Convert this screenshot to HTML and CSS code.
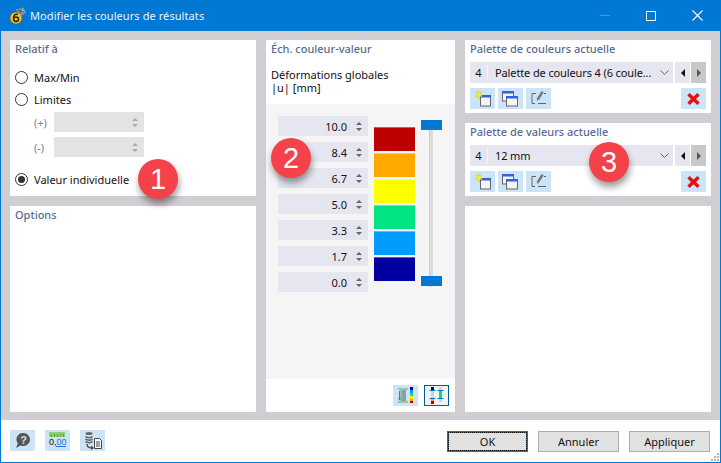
FILE: index.html
```html
<!DOCTYPE html>
<html lang="fr">
<head>
<meta charset="utf-8">
<title>Modifier les couleurs de résultats</title>
<link rel="stylesheet" href="styles.css">
</head>
<body>
<div class="window">
  <header class="titlebar">
    <svg class="app-icon" width="18" height="18" viewBox="0 0 18 18">
      <path d="M7 2.500l7-2 3 5-6 4.500z" fill="#8fa3c6"/>
      <path d="M8 3.500l7.500 1.500M9 1.500l5 6M12.500 1l-3 7.500" stroke="#3d5688" stroke-width=".8" fill="none"/>
      <circle cx="7" cy="11" r="6" fill="#f2c230" stroke="#6d5810" stroke-width=".6"/>
      <path d="M9 7.500c-3-1-4.500 1-4.500 3.500s1 3.500 2.500 3.500 2.500-1 2.500-2.500S8.500 10 7 10s-2 .7-2.500 1.500" fill="none" stroke="#22220f" stroke-width="1.500"/>
    </svg>
    <span class="title">Modifier les couleurs de résultats</span>
    <div class="winbtns">
      <span class="wb wb-min"></span>
      <span class="wb"><span class="wb-max"></span></span>
      <span class="wb">
        <svg width="11" height="11" viewBox="0 0 11 11"><path d="M.5.500l10 10M10.500.500l-10 10" stroke="#fff" stroke-width="1.100"/></svg>
      </span>
    </div>
  </header>

  <main class="content">
    <div class="col">
      <section class="panel panel-relative">
        <h2 class="ptitle">Relatif à</h2>
        <div class="radios">
          <div class="radio-row"><span class="radio"></span>Max/Min</div>
          <div class="radio-row"><span class="radio"></span>Limites</div>
          <div class="limit-row"><span class="limit-label">(+)</span><div class="spin spin-off"><span class="arrows"><i class="up"></i><i class="down"></i></span></div></div>
          <div class="limit-row"><span class="limit-label">(-)</span><div class="spin spin-off"><span class="arrows"><i class="up"></i><i class="down"></i></span></div></div>
          <div class="radio-row radio-last"><span class="radio radio-on"></span>Valeur individuelle</div>
        </div>
      </section>
      <section class="panel grow">
        <h2 class="ptitle">Options</h2>
      </section>
    </div>

    <section class="panel scale">
      <div class="scale-head">
        <h2 class="ptitle">Éch. couleur-valeur</h2>
        <p class="scale-desc">Déformations globales<br>|u| [mm]</p>
      </div>
      <div class="scale-body">
        <div class="spins">
          <div class="spin"><span class="val">10.0</span><span class="arrows"><i class="up"></i><i class="down"></i></span></div>
          <div class="spin"><span class="val">8.4</span><span class="arrows"><i class="up"></i><i class="down"></i></span></div>
          <div class="spin"><span class="val">6.7</span><span class="arrows"><i class="up"></i><i class="down"></i></span></div>
          <div class="spin"><span class="val">5.0</span><span class="arrows"><i class="up"></i><i class="down"></i></span></div>
          <div class="spin"><span class="val">3.3</span><span class="arrows"><i class="up"></i><i class="down"></i></span></div>
          <div class="spin"><span class="val">1.7</span><span class="arrows"><i class="up"></i><i class="down"></i></span></div>
          <div class="spin"><span class="val">0.0</span><span class="arrows"><i class="up"></i><i class="down"></i></span></div>
        </div>
        <div class="bars">
          <span class="bar c1"></span><span class="bar c2"></span><span class="bar c3"></span>
          <span class="bar c4"></span><span class="bar c5"></span><span class="bar c6"></span>
        </div>
        <div class="slider">
          <span class="track"></span>
          <span class="thumb thumb-top"></span>
          <span class="thumb thumb-bottom"></span>
        </div>
      </div>
      <div class="scale-foot">
        <button class="ib">
          <svg width="19" height="19" viewBox="0 0 19 19">
            <path d="M2 2h10v2h-2v11h2v2H2v-2h2V4H2z" fill="#8fc9a8"/><rect x="5.500" y="4" width="4.500" height="11" fill="#8d9cb0"/>
            <path d="M3.500 5v9" stroke="#2f9a58"/><path d="M2 12h3l-1.500 2.500z" fill="#2f9a58"/>
            <rect x="14" y="1" width="3" height="3" fill="#0000a0"/><rect x="14" y="4" width="3" height="3" fill="#00a0ff"/><rect x="14" y="7" width="3" height="3" fill="#00e080"/><rect x="14" y="10" width="3" height="3" fill="#f5f500"/><rect x="14" y="13" width="3" height="2" fill="#ffa000"/><rect x="14" y="15" width="3" height="2" fill="#c00000"/>
          </svg>
        </button>
        <button class="ib ib-active">
          <svg width="19" height="19" viewBox="0 0 19 19">
            <rect x="4" y="1" width="3" height="17" fill="#d2d2d2"/><rect x="12" y="1" width="3" height="15" fill="#d2d2d2"/>
            <rect x="4" y="1" width="3" height="3" fill="#000090"/><rect x="4" y="13" width="3" height="2" fill="#ffa000"/><rect x="4" y="15" width="3" height="3" fill="#c00000"/>
            <rect x="12" y="5" width="3" height="8" fill="#10e060"/>
            <path d="M2.500 4.500h6M2.500 12.500h6M10.500 4.500h6M10.500 12.500h6" stroke="#0078c8"/>
          </svg>
        </button>
      </div>
    </section>

    <div class="col">
      <section class="panel palette">
        <h2 class="ptitle">Palette de couleurs actuelle</h2>
        <div class="combo-row">
          <div class="combo"><span class="num">4</span><span class="cname">Palette de couleurs 4 (6 coule...</span>
            <svg class="chev" width="9" height="5" viewBox="0 0 9 5"><path d="M.5.500l4 4 4-4" fill="none" stroke="#666"/></svg></div>
          <span class="nav"><i class="tri-l"></i></span><span class="nav nav-off"><i class="tri-r"></i></span>
        </div>
        <div class="tools">
          <button class="ib"><svg width="19" height="19" viewBox="0 0 19 19"><use href="#i-new"/></svg></button>
          <button class="ib"><svg width="19" height="19" viewBox="0 0 19 19"><use href="#i-copy"/></svg></button>
          <button class="ib"><svg width="19" height="19" viewBox="0 0 19 19"><use href="#i-edit"/></svg></button>
          <button class="ib ib-del"><svg width="13" height="12" viewBox="0 0 13 12"><use href="#i-x"/></svg></button>
        </div>
      </section>
      <section class="panel palette">
        <h2 class="ptitle">Palette de valeurs actuelle</h2>
        <div class="combo-row">
          <div class="combo"><span class="num">4</span><span class="cname">12 mm</span>
            <svg class="chev" width="9" height="5" viewBox="0 0 9 5"><path d="M.5.500l4 4 4-4" fill="none" stroke="#666"/></svg></div>
          <span class="nav"><i class="tri-l"></i></span><span class="nav nav-off"><i class="tri-r"></i></span>
        </div>
        <div class="tools">
          <button class="ib"><svg width="19" height="19" viewBox="0 0 19 19"><use href="#i-new"/></svg></button>
          <button class="ib"><svg width="19" height="19" viewBox="0 0 19 19"><use href="#i-copy"/></svg></button>
          <button class="ib"><svg width="19" height="19" viewBox="0 0 19 19"><use href="#i-edit"/></svg></button>
          <button class="ib ib-del"><svg width="13" height="12" viewBox="0 0 13 12"><use href="#i-x"/></svg></button>
        </div>
      </section>
      <section class="panel grow"></section>
    </div>
  </main>

  <footer class="footer">
    <div class="foot-tools">
      <button class="ib">
        <svg width="19" height="19" viewBox="0 0 19 19">
          <path d="M10.500 2a6.500 6.500 0 0 1 0 13c-1 0-2-.2-2.800-.6L3 17l1.800-4.600A6.500 6.500 0 0 1 10.500 2z" fill="#555"/>
          <text x="10.500" y="12.500" class="qmark">?</text>
        </svg>
      </button>
      <button class="ib">
        <svg width="19" height="19" viewBox="0 0 19 19">
          <rect x="1" y="1" width="16" height="5" fill="#8ccf6e"/>
          <path d="M3.500 3v3M6.500 3v3M9.500 3v3M12.500 3v3M15.500 3v3" stroke="#5f9c48"/>
          <text x="1" y="14" class="ruler-t">0,</text><text x="8.500" y="14" class="ruler-b">00</text>
          <path d="M8 15.500h10" stroke="#2a6fe0"/>
        </svg>
      </button>
      <button class="ib">
        <svg width="21" height="19" viewBox="0 0 21 19">
          <ellipse cx="7" cy="2.500" rx="3.500" ry="1.500" fill="#666"/><path d="M3.500 5.500c1 1.500 6 1.500 7 0M3.500 8c1 1.500 6 1.500 7 0M3.500 10.500c1 1.500 6 1.500 7 0" stroke="#666" stroke-width="1.500" fill="none"/>
          <path d="M5 13c0 3 2 4 5 4" stroke="#444" stroke-width="1.300" fill="none"/><path d="M9 14.500l3 2.500-3 2z" fill="#444"/>
          <path d="M12.500 7.500h5l2 2v8h-7z" fill="#fff" stroke="#444"/><path d="M14 11h4M14 13h4M14 15h4" stroke="#444"/>
        </svg>
      </button>
    </div>
    <div class="foot-actions">
      <button class="btn btn-default">OK</button>
      <button class="btn">Annuler</button>
      <button class="btn">Appliquer</button>
    </div>
    <svg class="grip" width="9" height="9" viewBox="0 0 9 9">
      <path d="M6 0h2v2H6zM3 3h2v2H3zM6 3h2v2H6zM0 6h2v2H0zM3 6h2v2H3zM6 6h2v2H6z" fill="#b5b5b5"/>
    </svg>
  </footer>

  <span class="badge badge-1">1</span>
  <span class="badge badge-2">2</span>
  <span class="badge badge-3">3</span>
</div>

<svg class="defs" width="0" height="0">
  <defs>
    <g id="i-new">
      <rect x="7.500" y="6.500" width="10" height="10.500" fill="#f4f4f4" stroke="#666"/>
      <rect x="7" y="6" width="11" height="2.500" fill="#3860d8"/>
      <path d="M5 1l1 2.800 2.800-1-1.400 2.700 2 1.700-2.800.3-.6 3-1-3-3 .2 2-2.200-1.400-2.700 2.800 1z" fill="#f5f020" stroke="#c8c040" stroke-width=".4"/>
    </g>
    <g id="i-copy">
      <rect x="1.500" y="2.500" width="11" height="9.500" fill="#f4f4f4" stroke="#666"/>
      <rect x="1" y="2" width="12" height="2.500" fill="#3860d8"/>
      <rect x="5.500" y="7.500" width="11" height="9.500" fill="#f4f4f4" stroke="#666"/>
      <rect x="5" y="7" width="12" height="2.500" fill="#3860d8"/>
    </g>
    <g id="i-edit">
      <path d="M7 4.500H3v10h3M9 14.500h8M15 4.500h2" fill="none" stroke="#666"/>
      <path d="M12.500 2l2.200 1.300-4.500 7.200-2.300 1.300.2-2.600z" fill="#777"/>
    </g>
    <g id="i-x">
      <path d="M1.500 1.200l10 9.600M11.500 1.200l-10 9.600" stroke="#e81010" stroke-width="3.400" fill="none"/>
    </g>
  </defs>
</svg>
</body>
</html>
```

FILE: styles.css
```css
* { box-sizing: border-box; }
html, body { margin: 0; padding: 0; }
body {
  width: 721px;
  height: 463px;
  overflow: hidden;
  font-family: "Noto Sans", "Liberation Sans", sans-serif;
  font-size: 11px;
  color: #111;
}
.window {
  position: relative;
  width: 721px;
  height: 463px;
  display: flex;
  flex-direction: column;
  border: 1px solid #0078d4;
  border-top: 0;
  background: #fff;
}
.titlebar {
  height: 31px;
  flex: none;
  background: #0078d4;
  color: #fff;
  display: flex;
  align-items: center;
  padding-left: 8px;
}
.app-icon { flex: none; }
.title { margin-left: 3px; font-size: 11px; letter-spacing: .08px; color: #eaf4fc; }
.winbtns { margin-left: auto; display: flex; }
.wb { width: 46px; height: 31px; display: flex; align-items: center; justify-content: center; }
.wb-min::before { content: ""; width: 10px; height: 1px; background: #3f9ae0; }
.wb-max { width: 10px; height: 10px; border: 1px solid #fff; }

.content {
  flex: 1;
  min-height: 0;
  background: #d0ced3;
  padding: 9px 9px 8px 9px;
  display: grid;
  grid-template-columns: 246px 189px 246px;
  column-gap: 10px;
}
.col { display: flex; flex-direction: column; gap: 10px; min-height: 0; }
.panel { background: #fff; }
.grow { flex: 1; }
.ptitle {
  margin: 0;
  font-size: 11px;
  line-height: 16px;
  font-weight: 500;
  color: #5a6c92;
  padding: 1px 0 0 5px;
}

.panel-relative { height: 156px; }
.radios { margin-top: 9px; padding-left: 5px; }
.radio-row { display: flex; align-items: center; height: 22px; gap: 6px; }
.radio-last { margin-top: 11px; }
.radio { width: 13px; height: 13px; border: 1px solid #333; border-radius: 50%; background: #fff; display: flex; align-items: center; justify-content: center; }
.radio-on::after { content: ""; width: 7px; height: 7px; border-radius: 50%; background: #333; }
.limit-row { display: flex; align-items: center; height: 20px; margin-bottom: 5px; }
.limit-row:nth-child(3) { margin-top: 2px; }
.limit-label { width: 39px; padding-left: 19px; color: #75839f; }
.spin { width: 90px; height: 20px; background: #e6e6f0; display: flex; align-items: center; justify-content: flex-end; }
.spin-off { background: #e3e3e3; }
.val { margin-right: 2px; }
.arrows { width: 19px; display: flex; flex-direction: column; align-items: center; gap: 3px; }
.up, .down { display: block; width: 0; height: 0; border-left: 3px solid transparent; border-right: 3px solid transparent; }
.up { border-bottom: 3px solid #666; }
.down { border-top: 3px solid #666; }
.spin-off .up { border-bottom-color: #aaa; }
.spin-off .down { border-top-color: #aaa; }

.scale { display: flex; flex-direction: column; }
.scale-head { height: 64px; flex: none; }
.scale-desc { margin: 11px 0 0; padding-left: 5px; line-height: 13px; }
.scale-body {
  flex: none;
  height: 275px;
  background: #f5f5f5;
  display: flex;
  padding: 12px 0 0 12px;
}
.spins { display: flex; flex-direction: column; gap: 6px; }
.bars { margin: 11px 0 0 6px; display: flex; flex-direction: column; gap: 2px; }
.bar { display: block; width: 41px; height: 24px; border-top: 1px solid rgba(255, 255, 255, .35); }
.c1 { background: #bd0000; }
.c2 { background: #ffa800; }
.c3 { background: #ffff00; }
.c4 { background: #00e484; }
.c5 { background: #009cff; }
.c6 { background: #0000a0; }
.slider { position: relative; width: 21px; height: 167px; margin: 4px 0 0 6px; display: flex; }
.track { width: 4px; height: 157px; margin: 10px 0 0 8px; background: #dcdcdc; border-left: 1px solid #cfcfcf; }
.thumb { position: absolute; left: 0; width: 21px; height: 10px; background: #0078d4; }
.thumb-top { top: 0; }
.thumb-bottom { top: 156px; }
.scale-foot { flex: 1; display: flex; justify-content: flex-end; align-items: center; gap: 6px; padding: 6px 6px 6px 0; }

.ib {
  flex: none;
  width: 25px;
  height: 21px;
  border: 0;
  padding: 0;
  background: #cce4f7;
  display: flex;
  align-items: center;
  justify-content: center;
}
.ib-active { background: #f0f4f8; border: 1px solid #005a9e; }
.palette { height: 73px; padding: 0 5px; }
.palette .ptitle { padding-left: 0; }
.combo-row { display: flex; margin-top: 5px; height: 21px; }
.combo { width: 203px; background: #e6e6f0; display: flex; align-items: center; position: relative; }
.num { width: 18px; text-align: center; border-right: 1px solid #f6f6fa; line-height: 15px; }
.cname { margin-left: 7px; letter-spacing: -.12px; }
.chev { position: absolute; right: 4px; top: 8px; }
.nav { width: 15px; margin-left: 1px; background: #e6e6f0; display: flex; align-items: center; justify-content: center; }
.nav:first-of-type { margin-left: 2px; }
.nav-off { background: #c8c8c8; width: 15px; margin-left: 1px; }
.tri-l { width: 0; height: 0; border-top: 4px solid transparent; border-bottom: 4px solid transparent; border-right: 4px solid #111; }
.tri-r { width: 0; height: 0; border-top: 4px solid transparent; border-bottom: 4px solid transparent; border-left: 4px solid #555; }
.tools { display: flex; gap: 3px; margin-top: 5px; }
.ib-del { margin-left: auto; }

.footer {
  position: relative;
  flex: none;
  height: 42px;
  display: flex;
  align-items: flex-start;
  padding: 10px 10px 0 9px;
}
.foot-tools { display: flex; gap: 10px; }
.foot-actions { margin-left: auto; display: flex; gap: 10px; margin-top: 1px; }
.btn {
  width: 81px;
  height: 21px;
  background: #e1e1e1;
  border: 1px solid #adadad;
  font: inherit;
  font-size: 11px;
  color: #111;
  padding: 0;
}
.btn-default { border: 1px solid #0078d4; outline: 1px dotted #111; outline-offset: -2px; box-shadow: inset 0 0 0 1px #0078d4; }
.grip { position: absolute; right: 0; bottom: 0; }
.qmark { font-family: "Liberation Sans", sans-serif; font-size: 11px; font-weight: 700; fill: #cce4f7; text-anchor: middle; }
.ruler-t { font-family: "Liberation Sans", sans-serif; font-size: 9px; fill: #111; }
.ruler-b { font-family: "Liberation Sans", sans-serif; font-size: 9px; fill: #2a6fe0; }

.badge {
  position: absolute;
  width: 40px;
  height: 40px;
  border-radius: 50%;
  background: #f4414a;
  color: #fff;
  font-family: "Liberation Sans", sans-serif;
  font-size: 29px;
  line-height: 40px;
  text-align: center;
  box-shadow: 1px 5px 7px rgba(0, 0, 0, .4);
}
.badge-1 { left: 137px; top: 159px; }
.badge-2 { left: 270px; top: 138px; }
.badge-3 { left: 588px; top: 142px; }
.defs { position: absolute; }
```
